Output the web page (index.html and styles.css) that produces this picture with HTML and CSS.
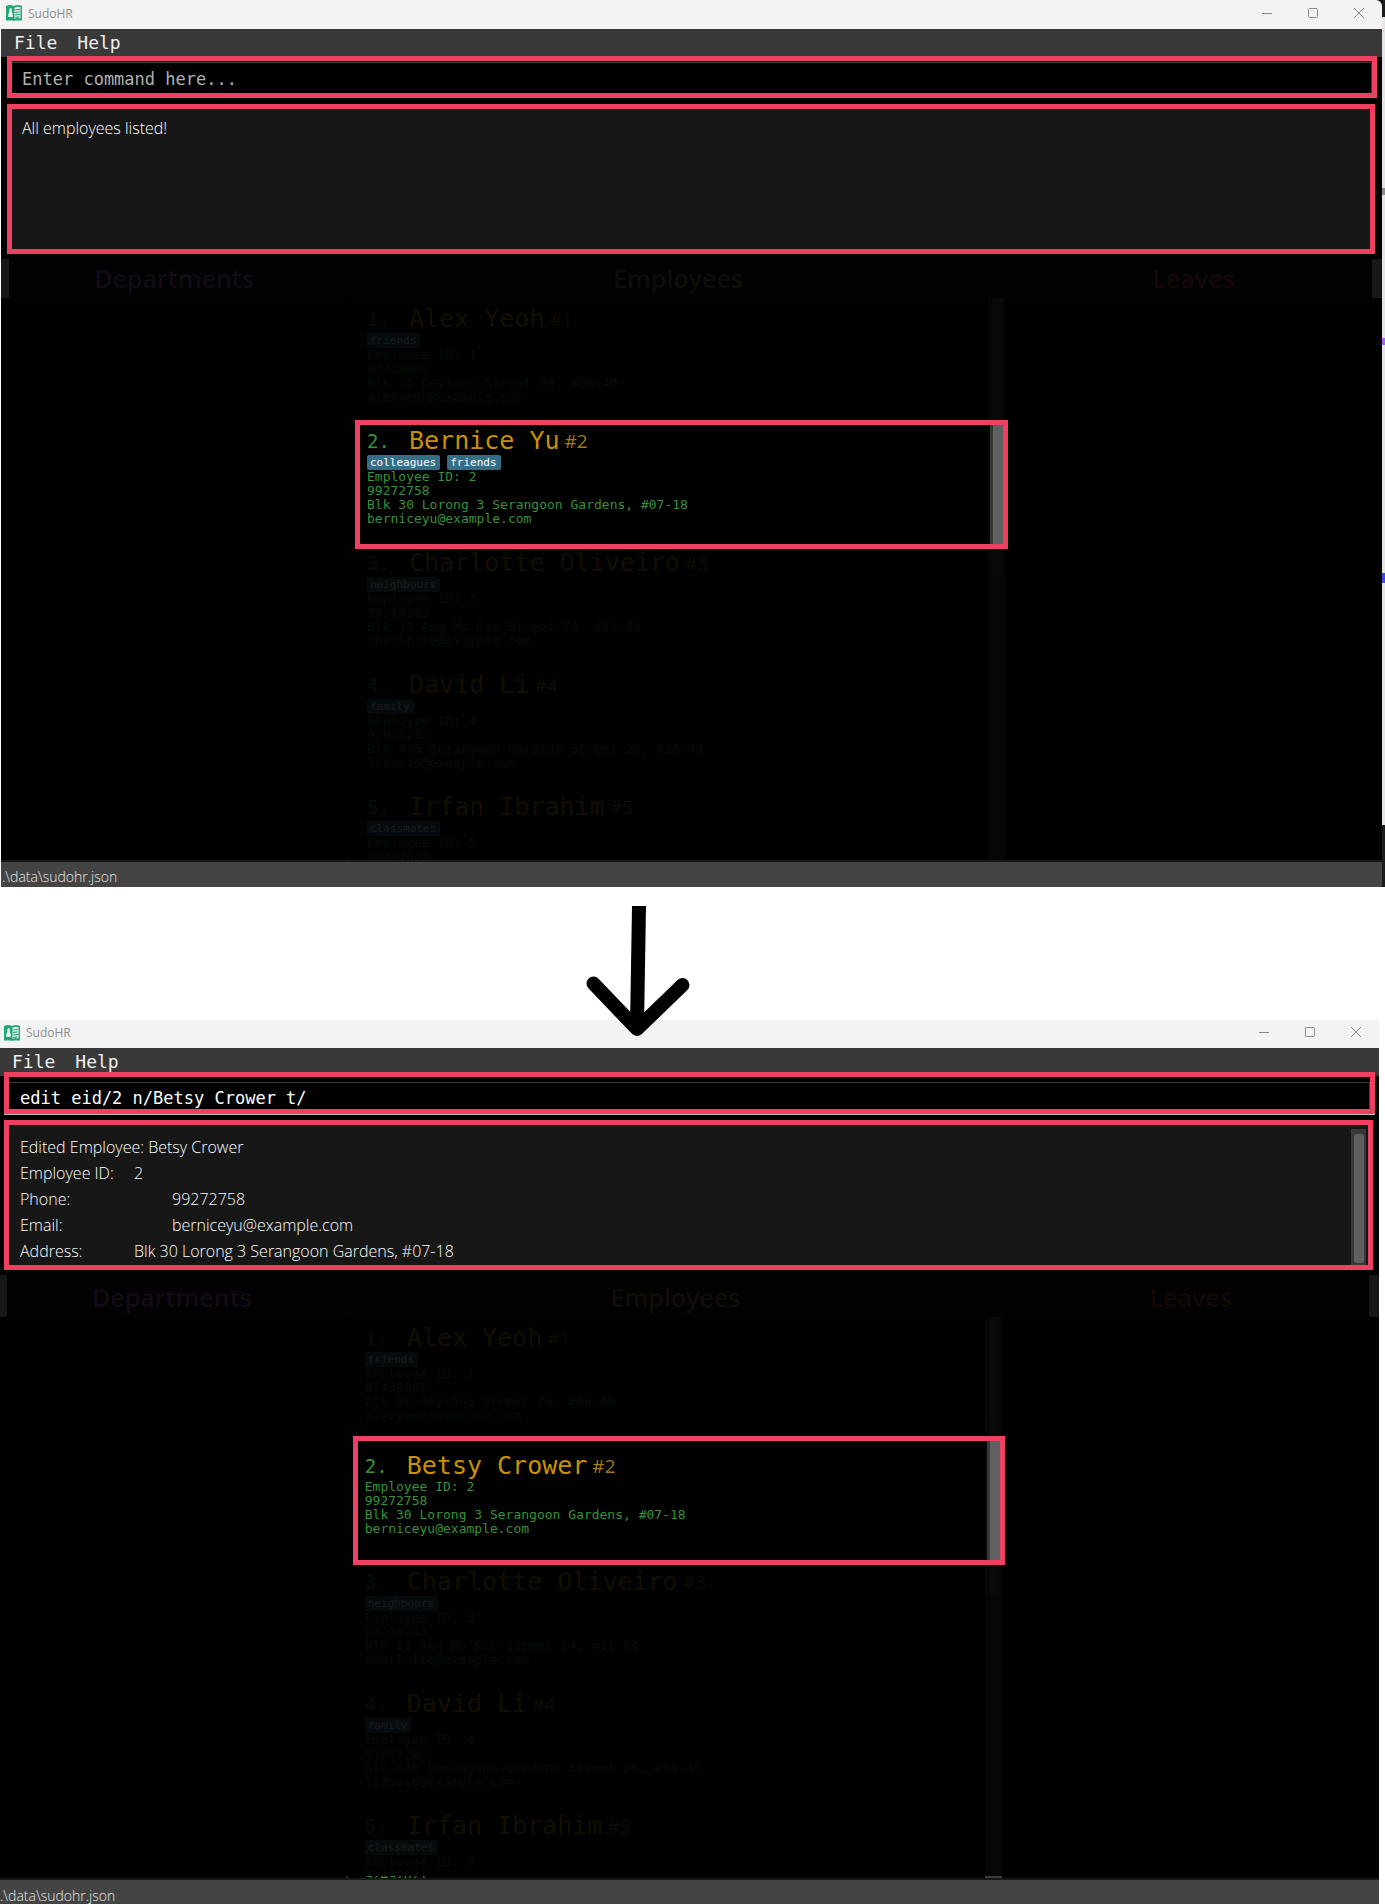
FILE: index.html
```html
<!DOCTYPE html>
<html lang="en">
<head>
<meta charset="utf-8">
<title>SudoHR edit command</title>
<link rel="stylesheet" href="styles.css">
</head>
<body>
<svg class="defs" width="0" height="0" aria-hidden="true">
  <symbol id="book" viewBox="0 0 16 16">
    <path fill="#1fa874" d="M0 1 Q4 -1 8 1 Q12 -1 16 1 V15.500 H9.500 L8 16 L6.500 15.500 H0 Z"/>
    <path fill="#f3f3f3" d="M8.500 3 Q11 1 14.500 2.200 V13.500 Q11 12.500 8.500 14 Z"/>
    <path fill="#f3f3f3" d="M3.400 4.500 a1.200 1.200 0 0 1 2.400 0 V7 L6.800 9 V12 H2.300 V9 L3.400 7 Z"/>
    <path stroke="#1fa874" stroke-width="1.200" fill="none" d="M9 5 L14 4.300 M9 7.500 L13.500 6.800 M9 10 L14 9.300 M9 12.500 L13.500 11.800"/>
  </symbol>
  <symbol id="min" viewBox="0 0 10 10"><path stroke="#888" d="M0 5.500H10"/></symbol>
  <symbol id="max" viewBox="0 0 10 10"><rect x=".5" y=".5" width="9" height="9" rx="1" fill="none" stroke="#888"/></symbol>
  <symbol id="close" viewBox="0 0 10 10"><path stroke="#888" d="M0 0L10 10M10 0L0 10"/></symbol>
</svg>

<section class="stage before">
  <div class="window">
    <header class="titlebar">
      <svg class="logo"><use href="#book"/></svg><span class="app-name">SudoHR</span>
      <button class="ctl" aria-label="Minimise"><svg><use href="#min"/></svg></button>
      <button class="ctl" aria-label="Maximise"><svg><use href="#max"/></svg></button>
      <button class="ctl" aria-label="Close"><svg><use href="#close"/></svg></button>
    </header>
    <nav class="menubar"><button>File</button><button>Help</button></nav>
    <div class="command"><input type="text" aria-label="Command" placeholder="Enter command here..."></div>
    <div class="result"><pre>All employees listed!</pre></div>
    <div class="heads"><h2 class="dep">Departments</h2><h2 class="emp">Employees</h2><h2 class="lea">Leaves</h2></div>
    <div class="board">
      <ol class="list">
        <li><h3><span class="num">1.</span><span class="name">Alex Yeoh</span><span class="id">#1</span></h3><div class="tags"><span>friends</span></div><p>Employee ID: 1</p><p>87438807</p><p>Blk 30 Geylang Street 29, #06-40</p><p>alexyeoh@example.com</p></li>
        <li class="picked"><h3><span class="num">2.</span><span class="name">Bernice Yu</span><span class="id">#2</span></h3><div class="tags"><span>colleagues</span><span>friends</span></div><p>Employee ID: 2</p><p>99272758</p><p>Blk 30 Lorong 3 Serangoon Gardens, #07-18</p><p>berniceyu@example.com</p><i class="frame"></i></li>
        <li><h3><span class="num">3.</span><span class="name">Charlotte Oliveiro</span><span class="id">#3</span></h3><div class="tags"><span>neighbours</span></div><p>Employee ID: 3</p><p>93210283</p><p>Blk 11 Ang Mo Kio Street 74, #11-04</p><p>charlotte@example.com</p></li>
        <li><h3><span class="num">4.</span><span class="name">David Li</span><span class="id">#4</span></h3><div class="tags"><span>family</span></div><p>Employee ID: 4</p><p>91031282</p><p>Blk 436 Serangoon Gardens Street 26, #16-43</p><p>lidavid@example.com</p></li>
        <li class="last"><h3><span class="num">5.</span><span class="name">Irfan Ibrahim</span><span class="id">#5</span></h3><div class="tags"><span>classmates</span></div><p>Employee ID: 5</p><p>92492021</p></li>
      </ol>
      <div class="shade"></div>
    </div>
    <footer class="status">.\data\sudohr.json</footer>
  </div>
</section>

<div class="arrow">
  <svg width="104" height="131" viewBox="0 0 104 131" fill="none" stroke="#000" stroke-width="14">
    <path d="M53 1L51 122"/>
    <path stroke-linecap="round" stroke-linejoin="round" d="M7.500 78.500L51 124L96.500 80"/>
  </svg>
</div>

<section class="stage after">
  <div class="window">
    <header class="titlebar">
      <svg class="logo"><use href="#book"/></svg><span class="app-name">SudoHR</span>
      <button class="ctl" aria-label="Minimise"><svg><use href="#min"/></svg></button>
      <button class="ctl" aria-label="Maximise"><svg><use href="#max"/></svg></button>
      <button class="ctl" aria-label="Close"><svg><use href="#close"/></svg></button>
    </header>
    <nav class="menubar"><button>File</button><button>Help</button></nav>
    <div class="command"><input type="text" aria-label="Command" value="edit eid/2 n/Betsy Crower t/"></div>
    <div class="result"><pre>Edited Employee: Betsy Crower
Employee ID:&#9;2
Phone:&#9;&#9;&#9;99272758
Email:&#9;&#9;&#9;berniceyu@example.com
Address:&#9;&#9;Blk 30 Lorong 3 Serangoon Gardens, #07-18</pre><div class="track"><div class="thumb"></div></div></div>
    <div class="heads"><h2 class="dep">Departments</h2><h2 class="emp">Employees</h2><h2 class="lea">Leaves</h2></div>
    <div class="board">
      <ol class="list">
        <li><h3><span class="num">1.</span><span class="name">Alex Yeoh</span><span class="id">#1</span></h3><div class="tags"><span>friends</span></div><p>Employee ID: 1</p><p>87438807</p><p>Blk 30 Geylang Street 29, #06-40</p><p>alexyeoh@example.com</p></li>
        <li class="picked"><h3><span class="num">2.</span><span class="name">Betsy Crower</span><span class="id">#2</span></h3><p>Employee ID: 2</p><p>99272758</p><p>Blk 30 Lorong 3 Serangoon Gardens, #07-18</p><p>berniceyu@example.com</p><i class="frame"></i></li>
        <li><h3><span class="num">3.</span><span class="name">Charlotte Oliveiro</span><span class="id">#3</span></h3><div class="tags"><span>neighbours</span></div><p>Employee ID: 3</p><p>93210283</p><p>Blk 11 Ang Mo Kio Street 74, #11-04</p><p>charlotte@example.com</p></li>
        <li><h3><span class="num">4.</span><span class="name">David Li</span><span class="id">#4</span></h3><div class="tags"><span>family</span></div><p>Employee ID: 4</p><p>91031282</p><p>Blk 436 Serangoon Gardens Street 26, #16-43</p><p>lidavid@example.com</p></li>
        <li class="last"><h3><span class="num">5.</span><span class="name">Irfan Ibrahim</span><span class="id">#5</span></h3><div class="tags"><span>classmates</span></div><p>Employee ID: 5</p><p>92492021</p></li>
      </ol>
      <div class="shade"></div>
    </div>
    <footer class="status">.\data\sudohr.json</footer>
  </div>
</section>
</body>
</html>
```

FILE: styles.css
```css
*, *::after { box-sizing: border-box; }
body, h2, h3, p, pre, ol { margin: 0; padding: 0; }
body { background: #fff; font-family: "Open Sans", "Noto Sans", sans-serif; overflow-x: hidden; }
button { border: 0; background: none; padding: 0; color: inherit; font: inherit; }
.defs { position: absolute; }

/* two states of the window */
.stage { overflow: hidden; }
.before {
  padding: 0 3px 0 1px;
  background: linear-gradient(#1c1c1c 17px, #e6e4e4 17px 188px, #8c8c8c 188px 195px, #e6e4e4 195px 338px, #b060f0 338px 345px, #e6e4e4 345px 573px, #4048e0 573px 583px, #e6e4e4 583px 825px, #1c1c1c 825px) right / 3px 100% no-repeat;
}
.window { background: #000; }
.after .window { margin: 0 6px 0 -1px; }

.titlebar { display: flex; align-items: center; height: 29px; padding-left: 5px; background: #f3f3f3; color: #8f8f8f; font-size: 12px; }
.after .titlebar { height: 28px; }
.before .titlebar { border-top-right-radius: 6px; }
.logo { width: 16px; height: 16px; margin: 0 6px 3px 0; }
.app-name { flex: 1; line-height: 16px; padding-bottom: 2px; }
.ctl { display: flex; align-items: center; justify-content: center; width: 46px; height: 26px; align-self: flex-start; }
.after .ctl { height: 24px; }
.ctl svg { width: 10px; height: 10px; overflow: visible; }

.menubar { display: flex; gap: 20px; height: 28px; padding-left: 13px; background: #393939; color: #f0f0f0; font: 18px/28px "DejaVu Sans Mono", monospace; }

.command { margin: -1px 5px 0 6px; border: 5px solid #ee4060; background: #000; height: 42px; padding-top: 1px; }
.after .command { margin: -4px 4px 0 5px; padding-top: 5px; box-shadow: 0 1px #bbb; }
.command input { display: block; width: 100%; height: 100%; border: 0; border-top: 1px solid #3c3c3c; border-right: 1px solid #3c3c3c; padding: 2px 10px 0; background: #000; color: #fff; font: 17px "DejaVu Sans Mono", monospace; outline: 0; }
.after .command input { padding: 4px 11px 0; }
.command input::placeholder { color: #b0b0b0; opacity: 1; }

.result { display: flex; justify-content: space-between; margin: 6px 7px 0 6px; height: 150px; border: 5px solid #ee4060; padding: 6px 0 0 10px; background: #171717; color: #fff; }
.after .result { margin: 6px 6px 0 5px; padding: 4px 2px 0 11px; }
.result pre { font: 300 16px/26px "Open Sans", "Noto Sans", sans-serif; tab-size: 38px; }
.after .result pre { padding-top: 5px; }
.track { width: 15px; padding: 5px 2px 2px 3px; background: #383838; }
.thumb { height: 100%; border-radius: 3px; background: #606060; }

.heads { display: grid; grid-template-columns: 338fr 662fr 363fr; height: 39px; margin-top: 5px; border: solid #171717; border-width: 0 10px 0 8px; background: #020202; }
.after .heads { height: 42px; }
.heads h2 { font-size: 25px; font-weight: 600; line-height: 38px; text-align: center; }
.after .heads h2 { line-height: 44px; }
.dep { color: #120a16; padding-right: 8px; }
.emp { color: #100d08; }
.lea { color: #160707; padding-left: 6px; }

.board { position: relative; display: grid; grid-template-columns: 346fr 662fr 373fr; height: 562px; overflow: hidden; }
.after .board { height: 561px; }
.list { grid-column: 2; list-style: none; border-left: 4px solid #181818; color: #359338; background: linear-gradient(#5e5e5e, #5e5e5e) right 7px top 0 / 10px 278px no-repeat, linear-gradient(#3c3c3c, #3c3c3c) right 4px top 0 / 17px 100% no-repeat; }
.list li { position: relative; display: flex; flex-direction: column; justify-content: center; height: 122px; padding: 7px 20px 16px 16px; font: 13px/14px "DejaVu Sans Mono", monospace; }
.list .last { justify-content: flex-start; height: auto; padding-bottom: 0; }
.after .picked { padding-bottom: 20px; }
.list h3 { display: flex; align-items: center; height: 28px; font-weight: 400; }
.num { width: 42px; font-size: 19px; }
.name { color: #c99100; font-size: 25px; }
.id { margin-left: 5px; color: #a07820; font: 19px "Open Sans", sans-serif; }
.tags { display: flex; gap: 7px; height: 15px; }
.tags span { padding: 0 4px 0 3px; border-radius: 2px; background: #366d86; color: #fff; font-size: 11px; line-height: 15px; }
.shade { position: absolute; inset: 0; background: rgba(0, 0, 0, .9); }
.after .shade { bottom: 2px; }

/* the employee that the command changes stands above the shade */
.list .picked { z-index: 2; }
.frame { position: absolute; inset: 0 1px -7px 4px; border: 5px solid #ee4060; }
.after .frame { inset: -3px 1px -4px 4px; }
.frame::after { content: ""; position: absolute; inset: 0 0 0 auto; width: 13px; background: #606060; border-left: 3px solid #383838; }

.status { height: 27px; border-top: 2px solid #171717; padding-left: 1px; background: #444; color: #e6e6e6; font-size: 14px; font-weight: 300; line-height: 29px; overflow: hidden; }
.after .status { height: 26px; line-height: 32px; }

.arrow { position: relative; z-index: 3; height: 133px; padding: 18px 0 0 42.3%; }
.arrow svg { display: block; }
```
